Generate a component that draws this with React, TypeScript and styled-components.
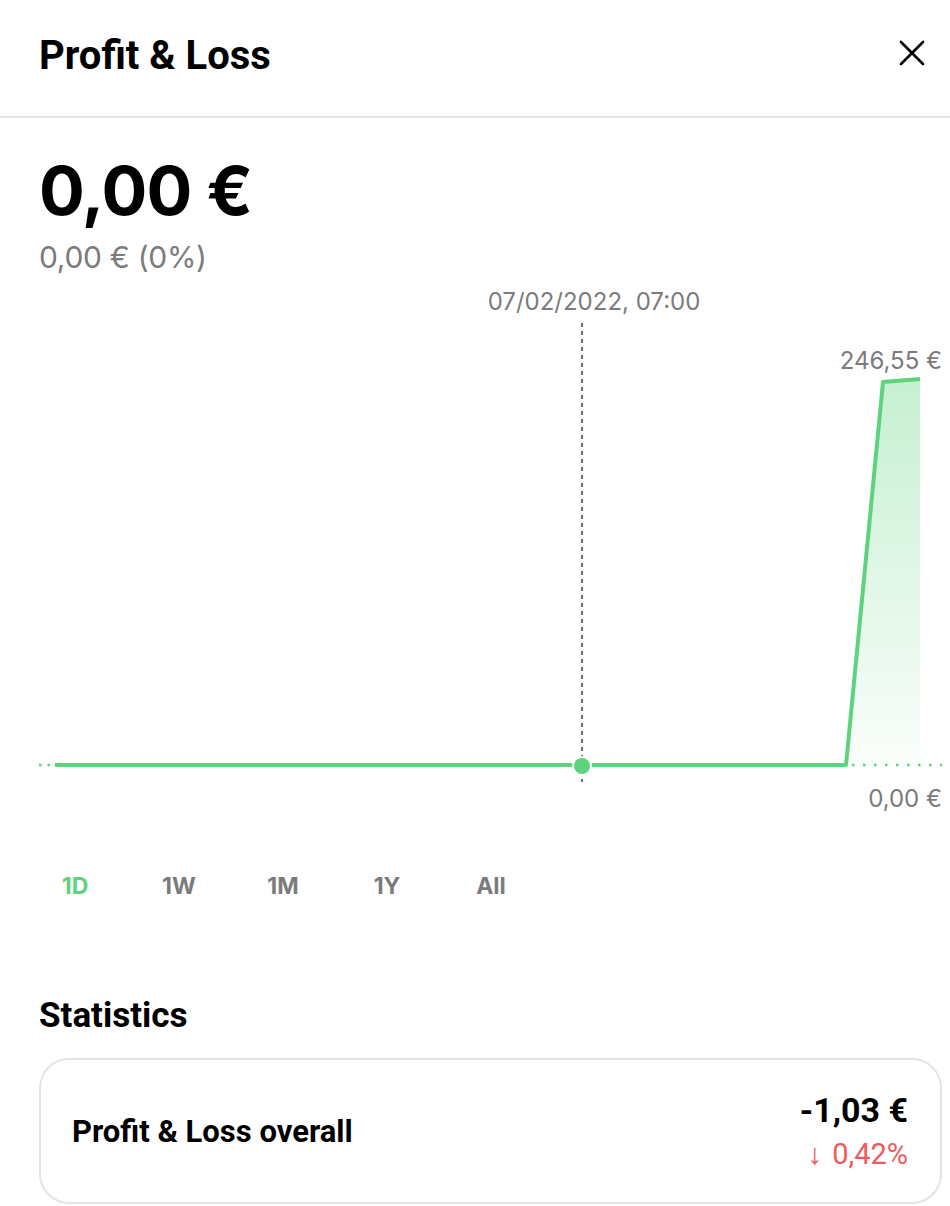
import React from 'react'
import styled, { createGlobalStyle } from 'styled-components'

const GREEN = '#5dd37e'
const GREY = '#7b7b7b'

const GlobalStyle = createGlobalStyle`
  html, body {
    margin: 0;
    padding: 0;
    background: #ffffff;
  }
  body {
    font-family: "Inter", "Noto Sans", sans-serif;
    color: #000000;
  }
`

const Page = styled.div`
  width: 950px;
  height: 1206px;
  overflow: hidden;
  background: #ffffff;
`

const Header = styled.header`
  height: 116px;
  padding: 0 20px 0 39px;
  display: flex;
  align-items: center;
  justify-content: space-between;
  border-bottom: 2px solid #e6e6e6;
`

const Title = styled.h1`
  margin: 0;
  font-family: "Roboto", sans-serif;
  font-weight: 700;
  font-size: 40px;
  letter-spacing: 0;
  padding-bottom: 6px;
`

const CloseButton = styled.button`
  width: 36px;
  height: 36px;
  border: 0;
  padding: 0;
  background: transparent;
  display: flex;
  align-items: center;
  justify-content: center;
  margin-bottom: 10px;
`

const Body = styled.main`
  padding: 0 8px 0 39px;
`

const Balance = styled.div`
  margin-top: 31px;
  font-weight: 700;
  font-size: 68px;
  line-height: 82px;
  letter-spacing: -1px;
`

const Change = styled.div`
  margin-top: 7px;
  font-size: 30px;
  line-height: 38px;
  color: ${GREY};
  letter-spacing: -0.3px;
`

const Chart = styled.div`
  position: relative;
  margin-top: 9px;
  width: 903px;
  height: 535px;
`

const ChartLabel = styled.span<{ $top: number; $center?: number }>`
  position: absolute;
  top: ${p => p.$top}px;
  ${p => (p.$center !== undefined ? `left: ${p.$center}px; transform: translateX(-50%);` : 'right: 0;')}
  font-size: 24px;
  line-height: 28px;
  color: ${GREY};
  white-space: nowrap;
`

const Periods = styled.nav`
  display: flex;
  gap: 32px;
  margin-top: 51px;
`

const Period = styled.button<{ $active?: boolean }>`
  width: 72px;
  border: 0;
  padding: 0;
  background: transparent;
  font-family: "Inter", sans-serif;
  font-weight: 700;
  font-size: 23px;
  line-height: 30px;
  color: ${p => (p.$active ? GREEN : GREY)};
`

const SectionTitle = styled.h2`
  margin: 95px 0 0;
  font-family: "Roboto", sans-serif;
  font-weight: 700;
  font-size: 35px;
  line-height: 40px;
`

const Card = styled.section`
  margin-top: 22px;
  height: 146px;
  box-sizing: border-box;
  border: 2px solid #e4e4e6;
  border-radius: 30px;
  padding: 0 32px 0 31px;
  display: flex;
  align-items: center;
  justify-content: space-between;
`

const CardLabel = styled.div`
  font-family: "Roboto", sans-serif;
  font-weight: 700;
  font-size: 31px;
  padding-top: 1px;
`

const CardValues = styled.div`
  display: flex;
  flex-direction: column;
  align-items: flex-end;
  gap: 9px;
  padding-bottom: 2px;
`

const CardValue = styled.div`
  font-family: "Roboto", sans-serif;
  font-weight: 700;
  font-size: 34px;
  line-height: 38px;
`

const CardPercent = styled.div`
  font-family: "Roboto", sans-serif;
  font-size: 29px;
  line-height: 32px;
  color: #ee5a5f;
  word-spacing: 3px;
`

const periods = ['1D', '1W', '1M', '1Y', 'All']

const CloseIcon = () => (
  <svg width='26' height='26' viewBox='0 0 26 26'>
    <path d='M2 2 L24 24 M24 2 L2 24' stroke='#000' strokeWidth='2.6' strokeLinecap='round' />
  </svg>
)

const PnlChart = () => (
  <svg width='903' height='535' viewBox='0 0 903 535' style={{ position: 'absolute', left: 0, top: 0 }}>
    <defs>
      <linearGradient id='area' x1='0' y1='0' x2='0' y2='1'>
        <stop offset='0' stopColor={GREEN} stopOpacity='0.35' />
        <stop offset='1' stopColor={GREEN} stopOpacity='0.03' />
      </linearGradient>
    </defs>
    <line x1='543' y1='38' x2='543' y2='497' stroke='#6f6f78' strokeWidth='2' strokeDasharray='4 4' />
    <polygon points='807,480 844,97 881,94 881,480' fill='url(#area)' />
    <line x1='0' y1='480' x2='14' y2='480' stroke={GREEN} strokeWidth='2.5' strokeDasharray='2.5 6' />
    <line x1='813' y1='480' x2='903' y2='480' stroke={GREEN} strokeWidth='2.5' strokeDasharray='2.5 8.5' />
    <polyline points='16,480 807,480 844,97 881,94' fill='none' stroke={GREEN} strokeWidth='4' strokeLinejoin='round' />
    <circle cx='543' cy='481' r='10' fill='#ffffff' />
    <circle cx='543' cy='481' r='8' fill={GREEN} />
  </svg>
)

const App: React.FC = () => (
  <Page>
    <GlobalStyle />
    <Header>
      <Title>Profit &amp; Loss</Title>
      <CloseButton aria-label='Close'>
        <CloseIcon />
      </CloseButton>
    </Header>
    <Body>
      <Balance>0,00 €</Balance>
      <Change>0,00 € (0%)</Change>
      <Chart>
        <PnlChart />
        <ChartLabel $top={3} $center={555}>07/02/2022, 07:00</ChartLabel>
        <ChartLabel $top={62}>246,55 €</ChartLabel>
        <ChartLabel $top={500}>0,00 €</ChartLabel>
      </Chart>
      <Periods>
        {periods.map((p, i) => (
          <Period key={p} $active={i === 0}>{p}</Period>
        ))}
      </Periods>
      <SectionTitle>Statistics</SectionTitle>
      <Card>
        <CardLabel>Profit &amp; Loss overall</CardLabel>
        <CardValues>
          <CardValue>-1,03 €</CardValue>
          <CardPercent>↓ 0,42%</CardPercent>
        </CardValues>
      </Card>
    </Body>
  </Page>
)

export default App
